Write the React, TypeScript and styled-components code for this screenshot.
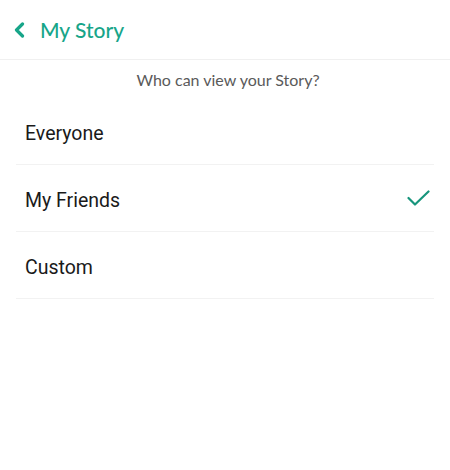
import React from "react";
import styled, { createGlobalStyle } from "styled-components";

const Global = createGlobalStyle`
  html, body { margin: 0; padding: 0; background: #fff; }
  body { width: 450px; height: 470px; overflow: hidden; }
`;

const Page = styled.div`
  width: 450px;
  height: 470px;
  background: #fff;
  display: flex;
  flex-direction: column;
`;

const Header = styled.div`
  height: 59px;
  border-bottom: 1px solid #f0f0f0;
  display: flex;
  align-items: center;
  padding-left: 13px;
  gap: 15px;
  box-sizing: content-box;
`;

const Title = styled.div`
  font-family: Lato, "Open Sans", sans-serif;
  font-size: 21px;
  font-weight: 500;
  color: #17a589;
  line-height: 24px;
  margin-top: 1px;
`;

const Subtitle = styled.div`
  font-family: Lato, "Open Sans", sans-serif;
  font-size: 16px;
  color: #5a5a5a;
  text-align: center;
  line-height: 20px;
  padding: 10px 0 8px 6px;
`;

const List = styled.div`
  margin: 0 16px;
  display: flex;
  flex-direction: column;
`;

const Row = styled.div`
  height: 66px;
  border-bottom: 1px solid #f2f2f2;
  display: flex;
  align-items: center;
  justify-content: space-between;
  padding: 0 4px 0 9px;
`;

const Label = styled.span`
  font-family: Roboto, "Noto Sans", sans-serif;
  font-size: 19.5px;
  color: #1a1a1a;
  margin-top: 4px;
`;

const Chevron = () => (
  <svg width="12" height="16" viewBox="0 0 12 16">
    <path d="M9.5 2 L3.5 8 L9.5 14" fill="none" stroke="#17a589" strokeWidth="3.2" strokeLinecap="round" strokeLinejoin="round" />
  </svg>
);

const Check = () => (
  <svg width="23" height="17" viewBox="0 0 23 17">
    <path d="M1.5 8 L8 14.5 L21.5 1.5" fill="none" stroke="#17957c" strokeWidth="2.2" strokeLinecap="round" strokeLinejoin="round" />
  </svg>
);

const options = [
  { label: "Everyone", selected: false },
  { label: "My Friends", selected: true },
  { label: "Custom", selected: false },
];

export default function App() {
  return (
    <Page>
      <Global />
      <Header>
        <Chevron />
        <Title>My Story</Title>
      </Header>
      <Subtitle>Who can view your Story?</Subtitle>
      <List>
        {options.map((o) => (
          <Row key={o.label}>
            <Label>{o.label}</Label>
            {o.selected && <Check />}
          </Row>
        ))}
      </List>
    </Page>
  );
}
